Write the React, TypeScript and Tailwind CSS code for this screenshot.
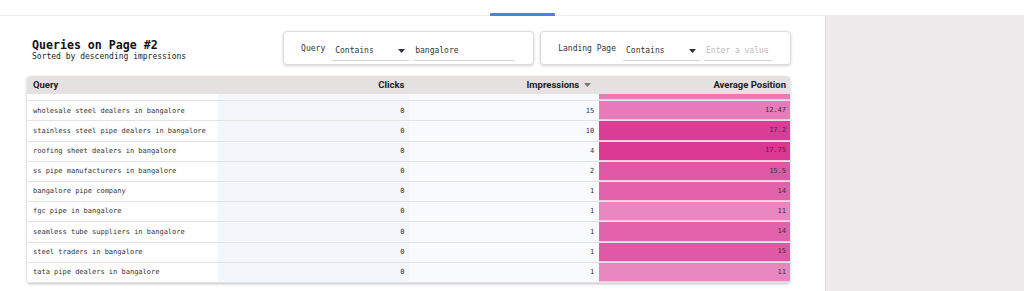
const rows = [
    { query: 'wholesale steel dealers in bangalore', clicks: 0, impressions: 15, position: '12.47', color: 'bg-[#e77ab8]' },
    { query: 'stainless steel pipe dealers in bangalore', clicks: 0, impressions: 10, position: '17.2', color: 'bg-[#da3c96]' },
    { query: 'roofing sheet dealers in bangalore', clicks: 0, impressions: 4, position: '17.75', color: 'bg-[#d93893]' },
    { query: 'ss pipe manufacturers in bangalore', clicks: 0, impressions: 2, position: '15.5', color: 'bg-[#df58a5]' },
    { query: 'bangalore pipe company', clicks: 0, impressions: 1, position: '14', color: 'bg-[#e263ab]' },
    { query: 'fgc pipe in bangalore', clicks: 0, impressions: 1, position: '11', color: 'bg-[#e886c0]' },
    { query: 'seamless tube suppliers in bangalore', clicks: 0, impressions: 1, position: '14', color: 'bg-[#e263ab]' },
    { query: 'steel traders in bangalore', clicks: 0, impressions: 1, position: '15', color: 'bg-[#df59a6]' },
    { query: 'tata pipe dealers in bangalore', clicks: 0, impressions: 1, position: '11', color: 'bg-[#e886c0]' },
]

const mono = "font-['DejaVu_Sans_Mono','Liberation_Mono',monospace]"

function Caret({ color = '#333' }: { color?: string }) {
    return (
        <svg width="7" height="4" viewBox="0 0 7 4" className="shrink-0">
            <path d="M0 0 L7 0 L3.5 4 Z" fill={color} />
        </svg>
    )
}

function Filter({ label, value, placeholder, inputWidth }: { label: string; value?: string; placeholder?: string; inputWidth: string }) {
    return (
        <div className={`flex items-center h-[34px] pl-[17px] pr-[18px] bg-white border border-[#dcdcdc] rounded-[4px] shadow-[0_1px_3px_rgba(0,0,0,0.18)] text-[8px] text-[#333] ${mono}`}>
            <span className="mt-[2px]">{label}</span>
            <div className="ml-[7px] w-[77px] h-[20px] flex items-center justify-between pl-[3px] pr-[4px] border-b border-[#d6d6d6] mt-[6px]">
                <span>Contains</span>
                <Caret />
            </div>
            <div className={`ml-[4px] ${inputWidth} h-[20px] flex items-center pl-[2px] border-b border-[#d6d6d6] mt-[6px]`}>
                {value ? <span>{value}</span> : <span className="text-[#bdbdbd]">{placeholder}</span>}
            </div>
        </div>
    )
}

function Row({ query, clicks, impressions, position, color }: typeof rows[number]) {
    return (
        <div className={`grid grid-cols-4 h-[20.2px] border-b border-[#e3e3e3] text-[7px] text-[#333] ${mono}`}>
            <div className="flex items-center pl-[6px] bg-white">{query}</div>
            <div className="flex items-center justify-end pr-[4px] bg-[#f3f6fb]">{clicks}</div>
            <div className="flex items-center justify-end pr-[5px] bg-[#f8fafd]">{impressions}</div>
            <div className={`flex items-center justify-end pr-[4px] border-b border-[#f4c8df] ${color}`}>{position}</div>
        </div>
    )
}

export default function App() {
    return (
        <main className="w-[1024px] h-[291px] bg-white flex flex-col overflow-hidden">
            {/* Tab strip */}
            <div className="h-[16px] flex items-end pl-[490px] border-b border-[#ececec] shrink-0">
                <div className="w-[65px] h-[3px] bg-[#4b80e8] rounded-t-[1px] -mb-px" />
            </div>

            <div className="flex flex-1 min-h-0">
                <section className="w-[825px] shrink-0 pl-[27px] pr-[35px] pt-[15px]">
                    {/* Title and filters */}
                    <div className="flex items-start">
                        <div className="pl-[5px] pt-[7px] flex-1">
                            <h1 className={`text-[11.6px] leading-[14px] font-bold text-[#111] ${mono}`}>Queries on Page #2</h1>
                            <p className={`text-[8px] leading-[9px] text-[#222] ${mono}`}>Sorted by descending impressions</p>
                        </div>
                        <div className="flex gap-[6px] mr-[-1px]">
                            <Filter label="Query" value="bangalore" inputWidth="w-[102px]" />
                            <Filter label="Landing Page" placeholder="Enter a value" inputWidth="w-[68px]" />
                        </div>
                    </div>

                    {/* Table */}
                    <div className="mt-[11px] rounded-[4px] overflow-hidden shadow-[0_1px_3px_rgba(0,0,0,0.25)] bg-white">
                        <div className="grid grid-cols-4 h-[18px] bg-[#e5e1e1] text-[9.5px] font-bold text-[#222] font-['Roboto','Liberation_Sans',sans-serif]">
                            <div className="flex items-center pl-[6px]">Query</div>
                            <div className="flex items-center justify-end pr-[4px]">Clicks</div>
                            <div className="flex items-center justify-end gap-[5px] pr-[8px]">
                                <span>Impressions</span>
                                <Caret color="#777" />
                            </div>
                            <div className="flex items-center justify-end pr-[4px]">Average Position</div>
                        </div>
                        <div className="h-[189px] overflow-hidden">
                            <div className="-mt-[13px]">
                                <Row query="galvanized pipe dealers in bangalore" clicks={0} impressions={16} position="12.9" color="bg-[#e77ab8]" />
                                {rows.map((r, i) => (
                                    <Row key={i} {...r} />
                                ))}
                            </div>
                        </div>
                    </div>
                </section>
                <aside className="flex-1 bg-[#efebec] border-l border-[#e0dcdc]" />
            </div>
        </main>
    )
}
